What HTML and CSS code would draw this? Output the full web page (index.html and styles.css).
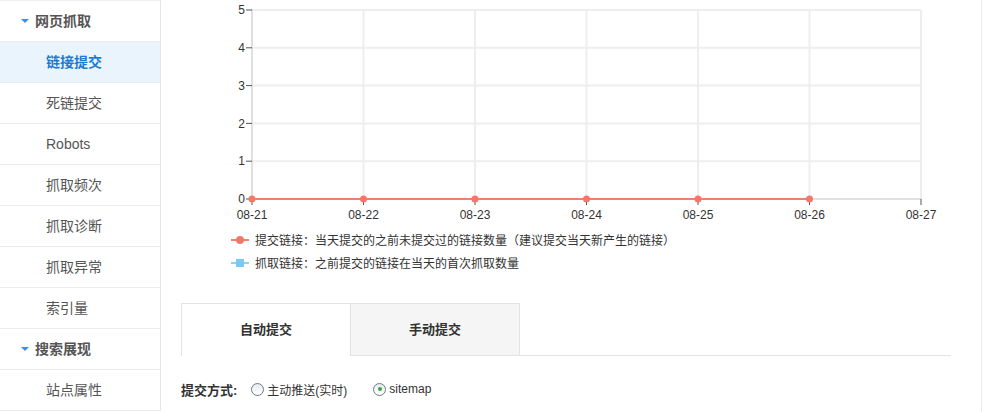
FILE: index.html
```html
<!DOCTYPE html>
<html lang="zh-CN">
<head>
    <meta charset="UTF-8">
    <title>链接提交</title>
    <link rel="stylesheet" href="styles.css">
</head>
<body>
    <div class="page">
        <ul class="side-nav">
            <li class="nav-group"><span class="caret"></span>网页抓取</li>
            <li class="nav-item active">链接提交</li>
            <li class="nav-item">死链提交</li>
            <li class="nav-item">Robots</li>
            <li class="nav-item">抓取频次</li>
            <li class="nav-item">抓取诊断</li>
            <li class="nav-item">抓取异常</li>
            <li class="nav-item">索引量</li>
            <li class="nav-group"><span class="caret"></span>搜索展现</li>
            <li class="nav-item">站点属性</li>
        </ul>

        <div class="main">
            <svg class="chart" width="790" height="228" viewBox="161 0 790 228">
                <g class="grid">
                    <line x1="252" y1="10" x2="921" y2="10"/>
                    <line x1="252" y1="47.8" x2="921" y2="47.8"/>
                    <line x1="252" y1="85.6" x2="921" y2="85.6"/>
                    <line x1="252" y1="123.4" x2="921" y2="123.4"/>
                    <line x1="252" y1="161.2" x2="921" y2="161.2"/>
                    <line x1="363.5" y1="10" x2="363.5" y2="199"/>
                    <line x1="475" y1="10" x2="475" y2="199"/>
                    <line x1="586.5" y1="10" x2="586.5" y2="199"/>
                    <line x1="698" y1="10" x2="698" y2="199"/>
                    <line x1="809.5" y1="10" x2="809.5" y2="199"/>
                    <line x1="921" y1="10" x2="921" y2="199"/>
                </g>
                <g class="axis">
                    <line x1="252" y1="9" x2="252" y2="200"/>
                    <line x1="252" y1="199" x2="921" y2="199"/>
                </g>
                <g class="ticks">
                    <line x1="246" y1="10" x2="252" y2="10"/>
                    <line x1="246" y1="47.8" x2="252" y2="47.8"/>
                    <line x1="246" y1="85.6" x2="252" y2="85.6"/>
                    <line x1="246" y1="123.4" x2="252" y2="123.4"/>
                    <line x1="246" y1="161.2" x2="252" y2="161.2"/>
                    <line x1="246" y1="199" x2="252" y2="199"/>
                    <line x1="252" y1="199" x2="252" y2="205"/>
                    <line x1="363.5" y1="199" x2="363.5" y2="205"/>
                    <line x1="475" y1="199" x2="475" y2="205"/>
                    <line x1="586.5" y1="199" x2="586.5" y2="205"/>
                    <line x1="698" y1="199" x2="698" y2="205"/>
                    <line x1="809.5" y1="199" x2="809.5" y2="205"/>
                    <line x1="921" y1="199" x2="921" y2="205"/>
                </g>
                <g class="y-labels">
                    <text x="245" y="14">5</text>
                    <text x="245" y="52">4</text>
                    <text x="245" y="90">3</text>
                    <text x="245" y="128">2</text>
                    <text x="245" y="165">1</text>
                    <text x="245" y="203">0</text>
                </g>
                <g class="x-labels">
                    <text x="252" y="219">08-21</text>
                    <text x="363.5" y="219">08-22</text>
                    <text x="475" y="219">08-23</text>
                    <text x="586.5" y="219">08-24</text>
                    <text x="698" y="219">08-25</text>
                    <text x="809.5" y="219">08-26</text>
                    <text x="921" y="219">08-27</text>
                </g>
                <polyline class="series" points="252,199 809.5,199"/>
                <g class="dots">
                    <circle cx="252" cy="199" r="3.5"/>
                    <circle cx="363.5" cy="199" r="3.5"/>
                    <circle cx="475" cy="199" r="3.5"/>
                    <circle cx="586.5" cy="199" r="3.5"/>
                    <circle cx="698" cy="199" r="3.5"/>
                    <circle cx="809.5" cy="199" r="3.5"/>
                </g>
            </svg>

            <div class="legend">
                <div class="legend-row">
                    <svg class="marker" width="18" height="10" viewBox="0 0 18 10">
                        <line x1="0" y1="5" x2="18" y2="5" stroke="#ef8171" stroke-width="2"/>
                        <circle cx="9" cy="5" r="4" fill="#ef7a69"/>
                    </svg>
                    <span>提交链接：当天提交的之前未提交过的链接数量（建议提交当天新产生的链接）</span>
                </div>
                <div class="legend-row">
                    <svg class="marker" width="18" height="10" viewBox="0 0 18 10">
                        <line x1="0" y1="5" x2="18" y2="5" stroke="#8fd0f5" stroke-width="2"/>
                        <rect x="5" y="1" width="8" height="8" fill="#7cc8f4"/>
                    </svg>
                    <span>抓取链接：之前提交的链接在当天的首次抓取数量</span>
                </div>
            </div>

            <div class="tabs">
                <div class="tab current">自动提交</div>
                <div class="tab">手动提交</div>
            </div>

            <div class="submit-way">
                <span class="way-label">提交方式:</span>
                <label class="radio"><span class="radio-dot"></span>主动推送(实时)</label>
                <label class="radio checked"><span class="radio-dot"></span>sitemap</label>
            </div>
        </div>
    </div>
</body>
</html>
```

FILE: styles.css
```css
body {
    margin: 0;
    padding: 0;
    background-color: #ffffff;
    font-family: "Liberation Sans", Arial, "Noto Sans CJK SC", sans-serif;
    font-size: 12px;
    color: #333333;
    overflow: hidden;
}

.page {
    display: flex;
    align-items: flex-start;
}

/* left menu */
.side-nav {
    list-style: none;
    margin: 0;
    padding: 0;
    width: 160px;
    border-right: 1px solid #e6e6e6;
    border-top: 1px solid #eeeeee;
    flex-shrink: 0;
}

.side-nav li {
    height: 40px;
    line-height: 40px;
    border-bottom: 1px solid #ececec;
    font-size: 14px;
    color: #555555;
}

.nav-group {
    display: flex;
    align-items: center;
    padding-left: 21px;
    font-weight: bold;
    color: #555555;
}

.caret {
    width: 0;
    height: 0;
    border-left: 4px solid transparent;
    border-right: 4px solid transparent;
    border-top: 4px solid #3b8fe0;
    margin-right: 6px;
}

.nav-item {
    padding-left: 46px;
}

.nav-item.active {
    background-color: #eaf4fd;
    color: #1b7bd2;
    font-weight: bold;
}

/* content */
.main {
    width: 820px;
    min-height: 412px;
    border-right: 1px solid #ebebeb;
}

.chart {
    display: block;
}

.grid line {
    stroke: #eeeeee;
    stroke-width: 2;
}

.axis line {
    stroke: #e0e0e0;
    stroke-width: 2;
}

.ticks line {
    stroke: #555555;
    stroke-width: 1;
}

.y-labels text {
    text-anchor: end;
    font-size: 12px;
    fill: #333333;
}

.x-labels text {
    text-anchor: middle;
    font-size: 12px;
    fill: #333333;
}

.series {
    fill: none;
    stroke: #ef8070;
    stroke-width: 2;
}

.dots circle {
    fill: #ef7a69;
}

.legend {
    padding-left: 70px;
}

.legend-row {
    display: flex;
    align-items: center;
    height: 23px;
}

.marker {
    margin-right: 6px;
}

.tabs {
    display: flex;
    margin: 29px 0 0 20px;
    width: 770px;
    border-bottom: 1px solid #e3e3e3;
}

.tab {
    width: 168px;
    height: 51px;
    line-height: 51px;
    text-align: center;
    font-size: 13px;
    font-weight: bold;
    color: #333333;
    background-color: #f5f5f5;
    border: 1px solid #e3e3e3;
    border-bottom: none;
    margin-bottom: -1px;
}

.tab.current {
    background-color: #ffffff;
    border-right: none;
    height: 52px;
}

.submit-way {
    display: flex;
    align-items: center;
    margin: 22px 0 0 20px;
    height: 22px;
    font-size: 12px;
}

.way-label {
    font-weight: bold;
    font-size: 13px;
    margin-right: 14px;
}

.radio {
    display: flex;
    align-items: center;
    margin-right: 26px;
}

.radio-dot {
    width: 11px;
    height: 11px;
    border: 1px solid #6b7b8c;
    border-radius: 50%;
    background: linear-gradient(#e8ecf0, #ffffff);
    margin-right: 3px;
    position: relative;
}

.radio.checked .radio-dot::after {
    content: "";
    position: absolute;
    left: 3.5px;
    top: 3.5px;
    width: 4px;
    height: 4px;
    border-radius: 50%;
    background-color: #3aa63a;
}
```
